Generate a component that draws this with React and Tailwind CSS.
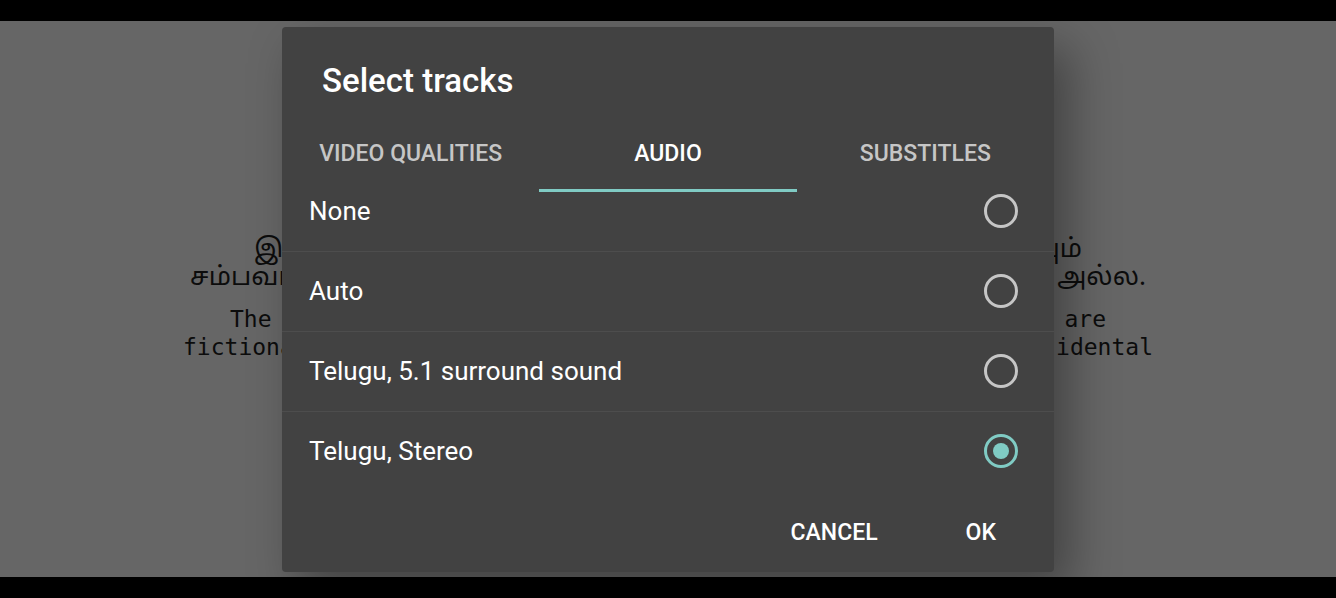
import { useState } from 'react'

const tabs = ['VIDEO QUALITIES', 'AUDIO', 'SUBSTITLES']
const tracks = ['None', 'Auto', 'Telugu, 5.1 surround sound', 'Telugu, Stereo']

function Disclaimer() {
  return (
    <div className="col-start-1 row-start-1 self-center leading-7 text-[#0c0c0c]">
      <div lang="ta" className="font-['Noto_Sans_Tamil','Noto_Sans',sans-serif] text-[26px]">
        <p className="mx-auto flex max-w-[828px] justify-between">
          <span>இ</span>
          <span>யும்</span>
        </p>
        <p className="mx-auto flex max-w-[956px] justify-between">
          <span>சம்பவங்</span>
          <span>அல்ல.</span>
        </p>
      </div>
      <div className="mt-3 font-['DejaVu_Sans_Mono',monospace] text-[23px]">
        <p className="mx-auto flex max-w-[876px] justify-between">
          <span>The</span>
          <span>are</span>
        </p>
        <p className="mx-auto flex max-w-[970px] justify-between">
          <span>fictiona</span>
          <span>idental</span>
        </p>
      </div>
    </div>
  )
}

export default function App() {
  const [tab, setTab] = useState('AUDIO')
  const [track, setTrack] = useState('Telugu, Stereo')

  return (
    <div className="flex min-h-screen flex-col bg-black py-[21px] font-[Roboto,sans-serif]">
      <main className="grid flex-1 grid-cols-1 items-center overflow-hidden bg-[#666666]">
        <Disclaimer />

        <div
          role="dialog"
          aria-labelledby="title"
          className="z-10 col-start-1 row-start-1 mx-auto w-full max-w-[772px] rounded-sm bg-[#424242] text-white shadow-[16px_20px_48px_rgba(0,0,0,0.35)]"
        >
          <h2 id="title" className="px-10 pt-8 text-[33px] leading-11 font-medium">Select tracks</h2>

          <div role="tablist" className="mt-3 grid grid-cols-3">
            {tabs.map((name) => (
              <button
                key={name}
                role="tab"
                aria-selected={tab === name}
                onClick={() => setTab(name)}
                className={`h-[77px] border-b-3 pt-1.5 text-[23px] font-medium ${tab === name ? 'border-[#80cbc4] text-white' : 'border-transparent text-[#c6c6c6]'}`}
              >
                {name}
              </button>
            ))}
          </div>

          {/* list is scrolled a little, so the first row starts under the tabs */}
          <div className="overflow-hidden">
            <ul className="-mt-5">
              {tracks.map((name) => (
                <li key={name} className="h-20 border-b border-[#4d4d4d] last:border-transparent">
                  <label className="flex h-full items-center justify-between pr-9 pl-[27px] text-[26px]">
                    {name}
                    <input
                      type="radio"
                      name="track"
                      checked={track === name}
                      onChange={() => setTrack(name)}
                      className="grid size-[34px] appearance-none place-items-center rounded-full border-3 border-[#c6c6c6] checked:border-[#80cbc4] checked:before:size-4 checked:before:rounded-full checked:before:bg-[#80cbc4]"
                    />
                  </label>
                </li>
              ))}
            </ul>
          </div>

          <div className="flex justify-end gap-6 pt-2.5 pr-[26px] pb-1.5 text-[23px] font-medium">
            <button className="h-16 px-8">CANCEL</button>
            <button className="h-16 px-8">OK</button>
          </div>
        </div>
      </main>
    </div>
  )
}
